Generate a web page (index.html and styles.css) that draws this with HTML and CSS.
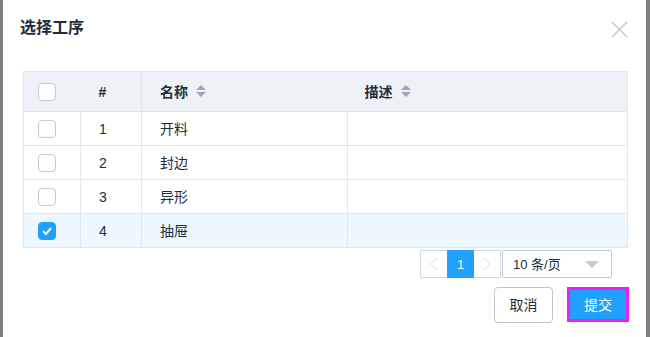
FILE: index.html
```html
<!DOCTYPE html>
<html>
<head>
    <meta charset="utf-8">
    <title>选择工序</title>
    <link rel="stylesheet" href="styles.css">
</head>
<body>
    <div class="dialog">
        <div class="dialog-header">
            <span class="dialog-title">选择工序</span>
            <a class="dialog-close" href="javascript:;">
                <svg width="17" height="17" viewBox="0 0 17 17"><path d="M1 1L16 16M16 1L1 16" stroke="#c0ccda" stroke-width="1.6" fill="none"/></svg>
            </a>
        </div>
        <div class="dialog-body">
            <table class="grid">
                <colgroup>
                    <col style="width:57px">
                    <col style="width:61px">
                    <col style="width:206px">
                    <col>
                </colgroup>
                <thead>
                    <tr>
                        <th class="c-check"><span class="checkbox"></span></th>
                        <th class="c-index">#</th>
                        <th class="c-name">名称<span class="sort"><i class="up"></i><i class="down"></i></span></th>
                        <th class="c-desc">描述<span class="sort"><i class="up"></i><i class="down"></i></span></th>
                    </tr>
                </thead>
                <tbody>
                    <tr>
                        <td class="c-check"><span class="checkbox"></span></td>
                        <td class="c-index">1</td>
                        <td class="c-name">开料</td>
                        <td></td>
                    </tr>
                    <tr>
                        <td class="c-check"><span class="checkbox"></span></td>
                        <td class="c-index">2</td>
                        <td class="c-name">封边</td>
                        <td></td>
                    </tr>
                    <tr>
                        <td class="c-check"><span class="checkbox"></span></td>
                        <td class="c-index">3</td>
                        <td class="c-name">异形</td>
                        <td></td>
                    </tr>
                    <tr class="selected">
                        <td class="c-check"><span class="checkbox checked">
                            <svg width="14" height="14" viewBox="0 0 14 14"><path d="M3 7.2L6 10L11 4.2" stroke="#fff" stroke-width="2" fill="none"/></svg>
                        </span></td>
                        <td class="c-index">4</td>
                        <td class="c-name">抽屉</td>
                        <td></td>
                    </tr>
                </tbody>
            </table>
            <div class="pagination">
                <a class="btn-prev" href="javascript:;">
                    <svg width="8" height="14" viewBox="0 0 8 14"><path d="M7 1L1 7L7 13" stroke="#e4e8f1" stroke-width="1.3" fill="none"/></svg>
                </a>
                <a class="pager active" href="javascript:;">1</a>
                <a class="btn-next" href="javascript:;">
                    <svg width="8" height="14" viewBox="0 0 8 14"><path d="M1 1L7 7L1 13" stroke="#e4e8f1" stroke-width="1.3" fill="none"/></svg>
                </a>
                <div class="sizes">
                    <span>10 条/页</span>
                    <i class="caret"></i>
                </div>
            </div>
        </div>
        <div class="dialog-footer">
            <a class="btn" href="javascript:;">取消</a>
            <a class="btn btn-primary" href="javascript:;">提交</a>
        </div>
    </div>
</body>
</html>
```

FILE: styles.css
```css
html,
body {
    overflow: hidden;
}

body,
div,
table,
th,
td {
    margin: 0;
    padding: 0;
}

body {
    height: 337px;
    background: #7f7f7f;
    color: #1f2d3d;
    font: 14px/1 "Liberation Sans", "Noto Sans CJK SC", sans-serif;
}

a {
    text-decoration: none;
    color: inherit;
}

.dialog {
    width: 643px;
    height: 337px;
    margin-left: 3px;
    background: #fff;
}

.dialog-header {
    display: flex;
    justify-content: space-between;
    align-items: flex-start;
    padding: 20px 18px 0 17px;
}

.dialog-title {
    font-size: 16px;
    line-height: 16px;
    font-weight: bold;
}

.dialog-close {
    display: block;
    height: 17px;
    margin-top: 1px;
}

.dialog-close svg {
    display: block;
}

.dialog-body {
    padding: 33px 18px 0 20px;
}

.grid {
    width: 605px;
    border-collapse: collapse;
    border: 1px solid #dfe6ec;
    table-layout: fixed;
}

.grid th {
    height: 39px;
    background: #eef1f6;
    border-bottom: 1px solid #dfe6ec;
    text-align: left;
    font-weight: bold;
}

.grid th.c-index {
    border-right: 1px solid #dfe6ec;
}

.grid td {
    height: 33px;
    border-bottom: 1px solid #dfe6ec;
    border-right: 1px solid #dfe6ec;
}

.grid .c-check {
    padding-left: 14px;
}

.grid .c-index {
    padding-left: 18px;
}

.grid .c-name {
    padding-left: 18px;
}

.grid th.c-desc {
    padding-left: 17px;
}

.grid tr.selected td {
    background: #edf7ff;
}

.checkbox {
    display: block;
    width: 16px;
    height: 16px;
    border: 1px solid #bfcbd9;
    border-radius: 4px;
    background: #fff;
}

.checkbox.checked {
    background: #20a0ff;
    border-color: #20a0ff;
}

.checkbox svg {
    display: block;
    margin: 1px;
}

.sort {
    display: inline-block;
    vertical-align: middle;
    margin-left: 8px;
    margin-top: -3px;
    width: 9px;
}

.sort i {
    display: block;
    width: 0;
    height: 0;
    border-left: 5px solid transparent;
    border-right: 5px solid transparent;
}

.sort .up {
    border-bottom: 5px solid #97a8be;
    margin-bottom: 2px;
}

.sort .down {
    border-top: 5px solid #97a8be;
}

.pagination {
    display: flex;
    justify-content: flex-end;
    margin: 2px 16px 0 0;
    height: 28px;
}

.pagination a {
    display: flex;
    align-items: center;
    justify-content: center;
    width: 26px;
    height: 26px;
    border: 1px solid #d1dbe5;
    background: #fff;
    font-size: 13px;
}

.pagination .btn-prev {
    border-right: 0;
}

.pagination .pager.active {
    width: 27px;
    height: 28px;
    border: 0;
    background: #20a0ff;
    color: #fff;
}

.pagination .btn-next {
    border-left: 0;
}

.sizes {
    display: flex;
    align-items: center;
    justify-content: space-between;
    box-sizing: border-box;
    width: 110px;
    height: 28px;
    margin-left: 1px;
    padding-left: 10px;
    border: 1px solid #bfcbd9;
    border-radius: 2px;
    font-size: 13px;
}

.sizes .caret {
    width: 0;
    height: 0;
    margin-right: 12px;
    border-left: 7px solid transparent;
    border-right: 7px solid transparent;
    border-top: 7px solid #bfcbd9;
}

.dialog-footer {
    display: flex;
    justify-content: flex-end;
    gap: 14px;
    padding: 9px 17px 0 0;
}

.btn {
    display: flex;
    align-items: center;
    justify-content: center;
    box-sizing: border-box;
    width: 59px;
    height: 36px;
    border: 1px solid #c4c4c4;
    border-radius: 4px;
    background: #fff;
    color: #1f2d3d;
}

.btn-primary {
    width: 62px;
    height: 35px;
    border: 3px solid #f21ef0;
    border-radius: 0;
    background: #20a0ff;
    color: #fff;
}
```
